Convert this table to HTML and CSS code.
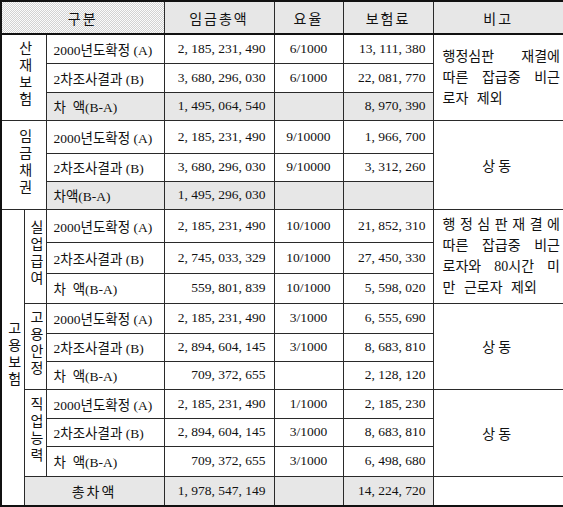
FILE: index.html
```html
<!DOCTYPE html>
<html lang="ko">
<head>
    <meta charset="UTF-8">
    <meta name="viewport" content="width=device-width, initial-scale=1.0">
    <title>보험료 산정 비교표</title>
    <link rel="stylesheet" href="styles.css">
</head>
<body>
    <table class="sheet">
        <colgroup>
            <col class="c-a">
            <col class="c-b">
            <col class="c-item">
            <col class="c-wage">
            <col class="c-rate">
            <col class="c-fee">
            <col class="c-note">
        </colgroup>
        <thead>
            <tr>
                <th colspan="3" class="shade">구분</th>
                <th class="shade">임금총액</th>
                <th class="shade">요율</th>
                <th class="shade">보험료</th>
                <th class="shade">비고</th>
            </tr>
        </thead>
        <tbody>
            <!-- 산재보험 -->
            <tr class="h29">
                <td colspan="2" rowspan="3" class="vert"><span>산재보험</span></td>
                <td class="item">2000년도확정 (A)</td>
                <td class="num">2, 185, 231, 490</td>
                <td class="rate">6/1000</td>
                <td class="num fee">13, 111, 380</td>
                <td rowspan="3" class="note">
                    <div class="fill">행정심판 재결에</div>
                    <div class="fill">따른 잡급중 비근</div>
                    <div class="last">로자 제외</div>
                </td>
            </tr>
            <tr class="h29">
                <td class="item">2차조사결과 (B)</td>
                <td class="num">3, 680, 296, 030</td>
                <td class="rate">6/1000</td>
                <td class="num fee">22, 081, 770</td>
            </tr>
            <tr class="h28">
                <td class="item shade">차 &nbsp;액(B-A)</td>
                <td class="num shade">1, 495, 064, 540</td>
                <td class="rate shade"></td>
                <td class="num fee shade">8, 970, 390</td>
            </tr>

            <!-- 임금채권 -->
            <tr class="h33">
                <td colspan="2" rowspan="3" class="vert"><span>임금채권</span></td>
                <td class="item">2000년도확정 (A)</td>
                <td class="num">2, 185, 231, 490</td>
                <td class="rate">9/10000</td>
                <td class="num fee">1, 966, 700</td>
                <td rowspan="3" class="same">상동</td>
            </tr>
            <tr class="h28">
                <td class="item">2차조사결과 (B)</td>
                <td class="num">3, 680, 296, 030</td>
                <td class="rate">9/10000</td>
                <td class="num fee">3, 312, 260</td>
            </tr>
            <tr class="h28">
                <td class="item shade">차액(B-A)</td>
                <td class="num shade">1, 495, 296, 030</td>
                <td class="rate shade"></td>
                <td class="num fee shade"></td>
            </tr>

            <!-- 고용보험 : 실업급여 -->
            <tr class="h33">
                <td rowspan="10" class="vert"><span>고용보험</span></td>
                <td rowspan="3" class="vert"><span>실업급여</span></td>
                <td class="item">2000년도확정 (A)</td>
                <td class="num">2, 185, 231, 490</td>
                <td class="rate">10/1000</td>
                <td class="num fee">21, 852, 310</td>
                <td rowspan="3" class="note">
                    <div class="fill">행 정 심 판 재 결 에</div>
                    <div class="fill">따른 잡급중 비근</div>
                    <div class="fill">로자와 80시간 미</div>
                    <div class="last">만 근로자 제외</div>
                </td>
            </tr>
            <tr class="h31">
                <td class="item">2차조사결과 (B)</td>
                <td class="num">2, 745, 033, 329</td>
                <td class="rate">10/1000</td>
                <td class="num fee">27, 450, 330</td>
            </tr>
            <tr class="h30">
                <td class="item">차 &nbsp;액(B-A)</td>
                <td class="num">559, 801, 839</td>
                <td class="rate">10/1000</td>
                <td class="num fee">5, 598, 020</td>
            </tr>

            <!-- 고용보험 : 고용안정 -->
            <tr class="h30">
                <td rowspan="3" class="vert"><span>고용안정</span></td>
                <td class="item">2000년도확정 (A)</td>
                <td class="num">2, 185, 231, 490</td>
                <td class="rate">3/1000</td>
                <td class="num fee">6, 555, 690</td>
                <td rowspan="3" class="same">상동</td>
            </tr>
            <tr class="h28">
                <td class="item">2차조사결과 (B)</td>
                <td class="num">2, 894, 604, 145</td>
                <td class="rate">3/1000</td>
                <td class="num fee">8, 683, 810</td>
            </tr>
            <tr class="h28">
                <td class="item">차 &nbsp;액(B-A)</td>
                <td class="num">709, 372, 655</td>
                <td class="rate"></td>
                <td class="num fee">2, 128, 120</td>
            </tr>

            <!-- 고용보험 : 직업능력 -->
            <tr class="h29">
                <td rowspan="3" class="vert"><span>직업능력</span></td>
                <td class="item">2000년도확정 (A)</td>
                <td class="num">2, 185, 231, 490</td>
                <td class="rate">1/1000</td>
                <td class="num fee">2, 185, 230</td>
                <td rowspan="3" class="same">상동</td>
            </tr>
            <tr class="h28">
                <td class="item">2차조사결과 (B)</td>
                <td class="num">2, 894, 604, 145</td>
                <td class="rate">3/1000</td>
                <td class="num fee">8, 683, 810</td>
            </tr>
            <tr class="h30">
                <td class="item">차 &nbsp;액(B-A)</td>
                <td class="num">709, 372, 655</td>
                <td class="rate">3/1000</td>
                <td class="num fee">6, 498, 680</td>
            </tr>

            <!-- 총차액 -->
            <tr class="h30">
                <td colspan="2" class="total shade">총차액</td>
                <td class="num shade">1, 978, 547, 149</td>
                <td class="rate shade"></td>
                <td class="num fee shade">14, 224, 720</td>
                <td></td>
            </tr>
        </tbody>
    </table>
</body>
</html>
```

FILE: styles.css
```css
*{
    margin: 0;
    padding: 0;
    box-sizing: border-box;
}

body{
    background-color: #fff;
    color: #111;
    font-family: "Liberation Serif", "Noto Sans CJK KR", serif;
}

.sheet{
    width: 563px;
    border-collapse: collapse;
    table-layout: fixed;
    border: 2px solid #111;
}

.c-a{ width: 23px; }
.c-b{ width: 22px; }
.c-item{ width: 118px; }
.c-wage{ width: 110px; }
.c-rate{ width: 69px; }
.c-fee{ width: 90px; }
.c-note{ width: 131px; }

.sheet th,
.sheet td{
    border: 1px solid #2a2a2a;
    font-weight: normal;
    font-size: 14px;
    padding: 0;
    vertical-align: middle;
}

.sheet thead th{
    height: 33px;
    letter-spacing: 2px;
    border-bottom: 2px solid #111;
}

.sheet .shade{
    background: #e8e8e8 repeating-conic-gradient(#d2d2d2 0 25%, #fbfbfb 0 50%) 0 0 / 2px 2px;
}

.h28{ height: 28px; }
.h29{ height: 29px; }
.h30{ height: 30px; }
.h31{ height: 31px; }
.h33{ height: 33px; }

.sheet .vert{
    text-align: center;
}

.vert span{
    display: inline-block;
    writing-mode: vertical-lr;
    text-orientation: upright;
    letter-spacing: 3px;
    font-size: 14px;
}

.sheet .item{
    padding-left: 7px;
    white-space: nowrap;
    font-size: 13.5px;
}

.sheet .num{
    text-align: right;
    padding-right: 8px;
    font-size: 13.5px;
    white-space: nowrap;
}

.sheet .num.fee{
    padding-right: 7px;
}

.sheet .rate{
    text-align: center;
    font-size: 13.5px;
}

.sheet .note{
    padding: 0 3px 0 9px;
    line-height: 21px;
    font-size: 14px;
}

.note .fill{
    text-align: justify;
    text-align-last: justify;
    white-space: nowrap;
}

.note .last{
    word-spacing: 5px;
}

.sheet .same{
    text-align: center;
    letter-spacing: 3px;
}

.sheet .total{
    text-align: center;
    letter-spacing: 2px;
}
```
